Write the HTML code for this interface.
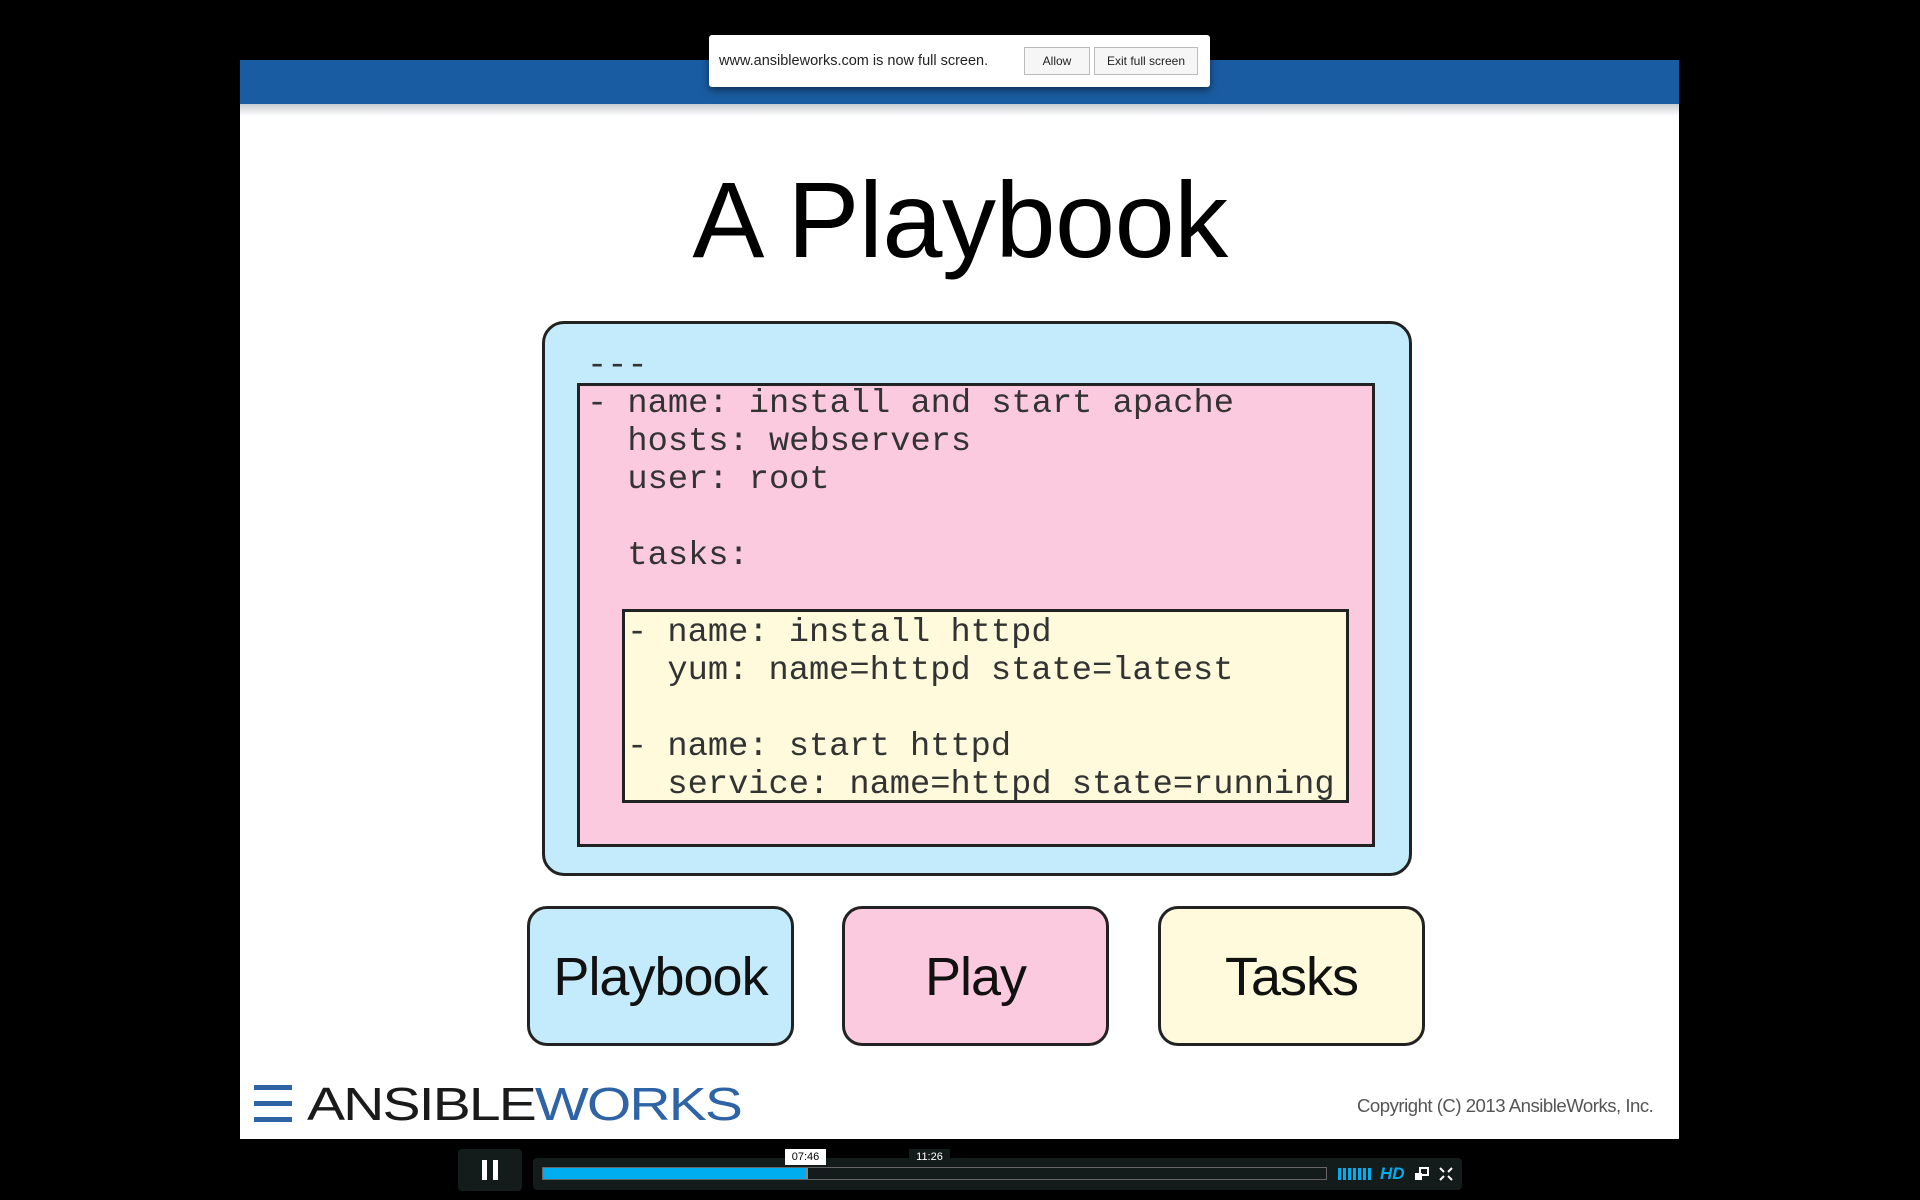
<!DOCTYPE html>
<html><head><meta charset="utf-8"><style>
*{margin:0;padding:0;box-sizing:border-box}
body{width:1920px;height:1200px;background:#000;position:relative;overflow:hidden;font-family:"Liberation Sans",sans-serif}
.abs{position:absolute}
#slide{left:240px;top:60px;width:1439px;height:1079px;background:#fff}
#bar{left:240px;top:60px;width:1439px;height:44px;background:#1a5ca1}
#shadow{left:240px;top:104px;width:1439px;height:12px;background:linear-gradient(#c8cdd3,#fff)}
#note{left:709px;top:35px;width:501px;height:52px;background:#fff;border-radius:3px;box-shadow:0 3px 8px rgba(0,0,0,.5);font-size:15px;color:#222}
.btn{position:absolute;top:12px;height:28px;border:1px solid #bbb;background:#f6f6f6;font-size:12px;line-height:26px;text-align:center;color:#222}
#title{left:0;width:1920px;top:150px;text-align:center;font-size:108px;line-height:140px;color:#000;letter-spacing:-0.5px}
.box{position:absolute;border:3px solid #222}
pre{position:absolute;font-family:"Liberation Mono",monospace;font-size:33.7px;line-height:38px;color:#333;margin:0}
.bb{position:absolute;border:3px solid #222;border-radius:20px;top:906px;height:140px;width:267px;font-size:54px;text-align:center;line-height:136px;color:#111;letter-spacing:-1px}
</style></head><body>
<div id="slide" class="abs"></div>
<div id="bar" class="abs"></div>
<div id="shadow" class="abs"></div>
<div id="note" class="abs">
<span class="abs" style="left:10px;top:18px;font-size:14.5px">www.ansibleworks.com is now full screen.</span>
<div class="btn" style="left:315px;width:66px">Allow</div>
<div class="btn" style="left:385px;width:104px">Exit full screen</div>
</div>
<div id="title" class="abs">A Playbook</div>
<div class="box" style="left:542px;top:321px;width:870px;height:555px;background:#c3ebfb;border-radius:22px"></div>
<div class="box" style="left:577px;top:383px;width:798px;height:464px;background:#fbcade"></div>
<div class="box" style="left:622px;top:609px;width:727px;height:194px;background:#fffadc"></div>
<pre style="left:587px;top:347px">---
- name: install and start apache
  hosts: webservers
  user: root

  tasks:

</pre>
<pre style="left:627px;top:614px">- name: install httpd
  yum: name=httpd state=latest

- name: start httpd
  service: name=httpd state=running</pre>
<div class="bb" style="left:527px;background:#c3ebfb">Playbook</div>
<div class="bb" style="left:842px;background:#fbcade">Play</div>
<div class="bb" style="left:1158px;background:#fffadc">Tasks</div>
<div class="abs" style="left:254px;top:1085px;width:38px;height:5px;background:#2e64a6"></div>
<div class="abs" style="left:254px;top:1101px;width:38px;height:5px;background:#2e64a6"></div>
<div class="abs" style="left:254px;top:1117px;width:38px;height:5px;background:#2e64a6"></div>
<div class="abs" style="left:307px;top:1078px;font-size:46px;line-height:52px;transform:scaleX(1.24);transform-origin:left;letter-spacing:-1.5px;color:#1a1a1a">ANSIBLE<span style="color:#2e64a6">WORKS</span></div>
<div class="abs" style="left:1357px;top:1095px;font-size:18.6px;color:#555;letter-spacing:-0.5px">Copyright (C) 2013 AnsibleWorks, Inc.</div>
<div class="abs" style="left:458px;top:1149px;width:64px;height:42px;background:#141b1b;border-radius:4px"></div>
<div class="abs" style="left:482px;top:1160px;width:5px;height:20px;background:#fff"></div>
<div class="abs" style="left:493px;top:1160px;width:5px;height:20px;background:#fff"></div>
<div class="abs" style="left:533px;top:1158px;width:929px;height:32px;background:#141b1b;border-radius:4px"></div>
<div class="abs" style="left:542px;top:1167px;width:785px;height:13px;border:1px solid #666;background:#141b1b"></div>
<div class="abs" style="left:543px;top:1168px;width:265px;height:11px;background:#00adef;border-right:2px solid #888"></div>
<div class="abs" style="left:785px;top:1149px;width:41px;height:16px;background:#fff;color:#000;font-size:11px;line-height:16px;text-align:center">07:46</div>
<div class="abs" style="left:909px;top:1149px;width:41px;height:16px;background:#141b1b;color:#fff;font-size:11px;line-height:16px;text-align:center">11:26</div>
<div class="abs" style="left:1338px;top:1168px;width:34px;height:12px;background:repeating-linear-gradient(90deg,#00adef 0 3px,transparent 3px 5px)"></div>
<div class="abs" style="left:1380px;top:1164px;font-size:17px;font-weight:bold;font-style:italic;color:#00adef">HD</div>
<svg class="abs" style="left:1414px;top:1166px" width="16" height="16"><rect x="6" y="2" width="8" height="7" fill="none" stroke="#fff" stroke-width="2"/><rect x="1" y="7" width="7" height="7" fill="#fff"/></svg>
<svg class="abs" style="left:1438px;top:1166px" width="16" height="16" stroke="#fff" stroke-width="2"><path d="M2 2l4 4M14 2l-4 4M2 14l4-4M14 14l-4-4"/></svg>
</body></html>
